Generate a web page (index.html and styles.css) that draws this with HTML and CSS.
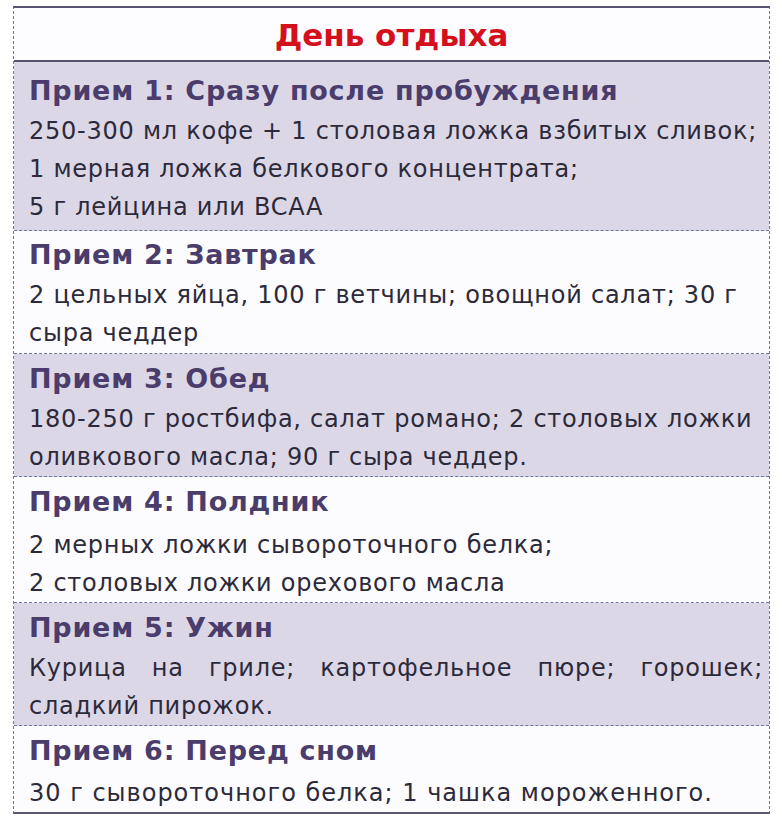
FILE: index.html
```html
<!DOCTYPE html>
<html lang="ru">
<head>
<meta charset="utf-8">
<title>День отдыха</title>
<link rel="stylesheet" href="styles.css">
</head>
<body>
<div class="menu">
  <div class="title">День отдыха</div>
  <div class="meal shaded r1">
    <div class="meal-name">Прием 1: Сразу после пробуждения</div>
    <div class="meal-text">250-300 мл кофе + 1 столовая ложка взбитых сливок;<br>1 мерная ложка белкового концентрата;<br>5 г лейцина или BCAA</div>
  </div>
  <div class="meal r2">
    <div class="meal-name">Прием 2: Завтрак</div>
    <div class="meal-text">2 цельных яйца, 100 г ветчины; овощной салат; 30 г<br>сыра чеддер</div>
  </div>
  <div class="meal shaded r3">
    <div class="meal-name">Прием 3: Обед</div>
    <div class="meal-text">180-250 г ростбифа, салат романо; 2 столовых ложки<br>оливкового масла; 90 г сыра чеддер.</div>
  </div>
  <div class="meal r4">
    <div class="meal-name">Прием 4: Полдник</div>
    <div class="meal-text">2 мерных ложки сывороточного белка;<br>2 столовых ложки орехового масла</div>
  </div>
  <div class="meal shaded r5">
    <div class="meal-name">Прием 5: Ужин</div>
    <div class="meal-text"><span class="justify-line">Курица на гриле; картофельное пюре; горошек;</span>сладкий пирожок.</div>
  </div>
  <div class="meal last r6">
    <div class="meal-name">Прием 6: Перед сном</div>
    <div class="meal-text">30 г сывороточного белка; 1 чашка мороженного.</div>
  </div>
</div>
</body>
</html>
```
FILE: styles.css
```css
html, body {
  margin: 0;
  padding: 0;
  background: #ffffff;
}

body {
  font-family: "DejaVu Sans", "Noto Sans", sans-serif;
}

.menu {
  margin: 6px 0 0 13px;
  width: 757px;
  box-sizing: border-box;
  border-top: 2px solid #55536f;
  border-bottom: 2px solid #5a5870;
  border-left: 1px dashed #6c78a6;
  border-right: 1px dashed #6c78a6;
}

.title {
  height: 54px;
  box-sizing: border-box;
  border-bottom: 2px solid #55536f;
  text-align: center;
  color: #d4101c;
  font-weight: 700;
  font-size: 31px;
  line-height: 54px;
  background: #fdfcfe;
}

.meal {
  padding: 3px 6px 0 15px;
  border-bottom: 1px dashed #6c78a6;
  background: #fcfbfd;
}

.meal.shaded {
  background: #dcd7e6;
}

.meal.r1 {
  padding-top: 7px;
  padding-bottom: 4px;
}

.meal.r2 {
  padding-top: 2px;
  padding-bottom: 1px;
}

.meal.r4 .meal-text {
  margin-top: 3px;
}

.meal.r5 {
  padding-bottom: 0;
}

.meal.last {
  border-bottom: none;
  padding-bottom: 0;
}

.meal.last .meal-text {
  margin-top: 2px;
  letter-spacing: 1px;
}

.meal-name {
  font-weight: 700;
  font-size: 27px;
  line-height: 43px;
  color: #4a3d6c;
  letter-spacing: 0.75px;
}

.meal-text {
  font-size: 24px;
  line-height: 38px;
  color: #2c2a3a;
  letter-spacing: 0.75px;
}

.justify-line {
  display: block;
  text-align: justify;
  text-align-last: justify;
}
```
